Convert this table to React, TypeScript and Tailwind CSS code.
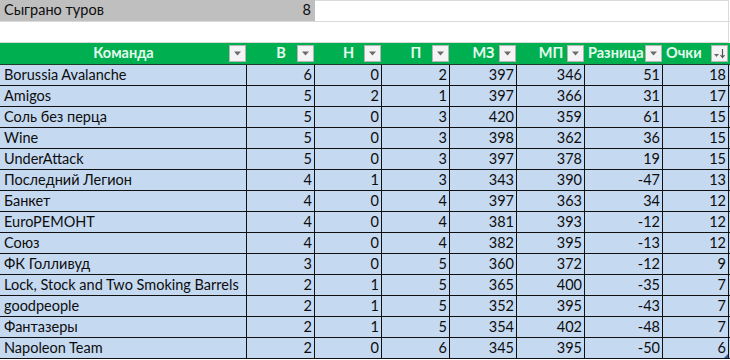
const ROWS: [string, number, number, number, number, number, number, number][] = [
  ['Borussia Avalanche', 6, 0, 2, 397, 346, 51, 18],
  ['Amigos', 5, 2, 1, 397, 366, 31, 17],
  ['Соль без перца', 5, 0, 3, 420, 359, 61, 15],
  ['Wine', 5, 0, 3, 398, 362, 36, 15],
  ['UnderAttack', 5, 0, 3, 397, 378, 19, 15],
  ['Последний Легион', 4, 1, 3, 343, 390, -47, 13],
  ['Банкет', 4, 0, 4, 397, 363, 34, 12],
  ['EuroPEMOHT', 4, 0, 4, 381, 393, -12, 12],
  ['Союз', 4, 0, 4, 382, 395, -13, 12],
  ['ФК Голливуд', 3, 0, 5, 360, 372, -12, 9],
  ['Lock, Stock and Two Smoking Barrels', 2, 1, 5, 365, 400, -35, 7],
  ['goodpeople', 2, 1, 5, 352, 395, -43, 7],
  ['Фантазеры', 2, 1, 5, 354, 402, -48, 7],
  ['Napoleon Team', 2, 0, 6, 345, 395, -50, 6],
]

const GRID = 'grid grid-cols-[247px_68px_67px_68px_67px_68px_78px_66px]'

function Dropdown() {
  return (
    <div className="absolute right-[1px] top-[2px] w-[17px] h-[17px] bg-[#f4f4f4] border border-[#b5b5b5] flex items-center justify-center">
      <svg width="9" height="5" viewBox="0 0 9 5">
        <path d="M1 0.5 L8 0.5 L4.5 4.5 Z" fill="#6b6b6b" />
      </svg>
    </div>
  )
}

function SortButton() {
  return (
    <div className="absolute right-[1px] top-[2px] w-[17px] h-[17px] bg-[#f4f4f4] border border-[#b5b5b5] flex items-center justify-center">
      <svg width="13" height="11" viewBox="0 0 13 11">
        <path d="M1 6 L6 6 L3.5 9 Z" fill="#6b6b6b" />
        <path d="M9.5 1 L9.5 9" stroke="#555" strokeWidth="1.2" />
        <path d="M7.5 7 L9.5 9.5 L11.5 7" stroke="#555" strokeWidth="1.2" fill="none" />
      </svg>
    </div>
  )
}

const HEADERS: { label: string; align: string }[] = [
  { label: 'Команда', align: 'justify-center' },
  { label: 'В', align: 'justify-center' },
  { label: 'Н', align: 'justify-center' },
  { label: 'П', align: 'justify-center' },
  { label: 'МЗ', align: 'justify-center' },
  { label: 'МП', align: 'justify-center' },
  { label: 'Разница', align: 'justify-start pl-[3px]' },
  { label: 'Очки', align: 'justify-start pl-[3px]' },
]

export default function App() {
  return (
    <div className="w-[730px] h-[360px] bg-white overflow-hidden font-['Lato','Liberation_Sans',sans-serif] text-[14.5px] text-[#0d0d0d] leading-none">
      {/* строка 1 */}
      <div className="flex h-[22px] border-b border-[#dadada]">
        <div className="w-[315px] bg-[#bfbfbf] flex items-center justify-between pl-[4px] pr-[4px]">
          <span>Сыграно туров</span>
          <span>8</span>
        </div>
        <div className="w-[414px] border-r border-t border-[#dadada]" />
      </div>
      {/* строка 2 */}
      <div className="h-[21px] w-[729px] border-b border-r border-[#dadada]" />

      {/* шапка таблицы */}
      <div className={`${GRID} h-[22px] bg-[#00b050] border-b border-[#1f3d2a]`}>
        {HEADERS.map((h, i) => (
          <div key={h.label} className={`relative flex items-center font-bold text-[#e6fbee] ${h.align}`}>
            <span>{h.label}</span>
            {i === 7 ? <SortButton /> : <Dropdown />}
          </div>
        ))}
      </div>

      {/* данные */}
      {ROWS.map((r, i) => (
        <div key={r[0]} className={`${GRID} h-[21px] bg-[#c5d9f1] border-b border-[#111]`}>
          <div className="flex items-center pl-[4px] border-r border-[#111] whitespace-nowrap">{r[0]}</div>
          {r.slice(1).map((v, j) => (
            <div key={j} className="relative flex items-center justify-end pr-[2px] border-r border-[#111]">
              {v}
              {i === ROWS.length - 1 && j === 6 && (
                <svg className="absolute right-0 bottom-0" width="4" height="4" viewBox="0 0 4 4">
                  <path d="M4 0 L4 4 L0 4 Z" fill="#2f5597" />
                </svg>
              )}
            </div>
          ))}
        </div>
      ))}
    </div>
  )
}
